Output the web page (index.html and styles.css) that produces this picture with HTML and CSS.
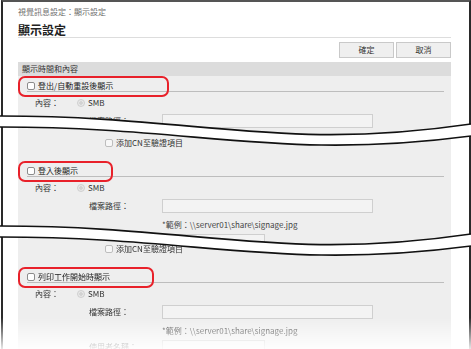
FILE: index.html
```html
<!DOCTYPE html>
<html lang="zh-Hant">
<head>
    <meta charset="UTF-8">
    <meta name="viewport" content="width=device-width, initial-scale=1.0">
    <title>顯示設定</title>
    <link rel="stylesheet" href="styles.css">
</head>
<body>
<div class="sheet">
    <div class="window">

        <!-- Top of the page -->
        <section class="slice slice-top">
            <p class="crumb">視覺訊息設定：顯示設定</p>
            <h1 class="title">顯示設定</h1>
            <div class="actions">
                <button class="btn">確定</button>
                <button class="btn">取消</button>
            </div>
            <div class="panel">
                <div class="panel-head">顯示時間和內容</div>

                <div class="sec-head">
                    <span class="check"></span>
                    <span>登出/自動重設後顯示</span>
                    <span class="mark mark-logout"></span>
                </div>
                <div class="field">
                    <span class="field-label">內容：</span>
                    <span class="radio"></span><span>SMB</span>
                </div>
                <div class="field sub">
                    <span class="field-label">檔案路徑：</span>
                    <span class="input"></span>
                </div>
                <div class="field sub note-row">
                    <span class="field-label"></span>
                    <span class="note">*範例：\\server01\share\signage.jpg</span>
                </div>
            </div>
        </section>

        <!-- Middle cut -->
        <section class="slice slice-mid">
            <div class="panel">
                <div class="field option">
                    <span class="check"></span>
                    <span>添加CN至驗證項目</span>
                </div>

                <div class="sec-head">
                    <span class="check"></span>
                    <span>登入後顯示</span>
                    <span class="mark mark-login"></span>
                </div>
                <div class="field">
                    <span class="field-label">內容：</span>
                    <span class="radio"></span><span>SMB</span>
                </div>
                <div class="field sub">
                    <span class="field-label">檔案路徑：</span>
                    <span class="input"></span>
                </div>
                <div class="field sub note-row">
                    <span class="field-label"></span>
                    <span class="note">*範例：\\server01\share\signage.jpg</span>
                </div>
                <div class="field sub">
                    <span class="field-label">使用者名稱：</span>
                    <span class="input input-short"></span>
                </div>
            </div>
        </section>

        <!-- Bottom cut -->
        <section class="slice slice-end">
            <div class="panel">
                <div class="field option">
                    <span class="check"></span>
                    <span>添加CN至驗證項目</span>
                </div>

                <div class="sec-head">
                    <span class="check"></span>
                    <span>列印工作開始時顯示</span>
                    <span class="mark mark-print"></span>
                </div>
                <div class="field">
                    <span class="field-label">內容：</span>
                    <span class="radio"></span><span>SMB</span>
                </div>
                <div class="field sub">
                    <span class="field-label">檔案路徑：</span>
                    <span class="input"></span>
                </div>
                <div class="field sub note-row">
                    <span class="field-label"></span>
                    <span class="note">*範例：\\server01\share\signage.jpg</span>
                </div>
                <div class="field sub">
                    <span class="field-label">使用者名稱：</span>
                    <span class="input input-short"></span>
                </div>
            </div>
        </section>
    </div>

    <!-- Torn edges drawn over the cuts -->
    <svg class="tears" width="471" height="349" viewBox="0 0 471 349">
        <defs>
            <g id="tear">
                <path class="tear-gap" d="M0,116 C200,116 280,152 471,124 L471,136 C280,161 200,127 0,127 Z"/>
                <path class="tear-edge" d="M0,116 C200,116 280,152 471,124"/>
                <path class="tear-edge" d="M0,127 C200,127 280,161 471,136"/>
            </g>
        </defs>
        <use href="#tear"/>
        <use href="#tear" transform="translate(0 110)"/>
    </svg>
</div>
</body>
</html>
```

FILE: styles.css
```css
/* General */
* {
    box-sizing: border-box;
}

body {
    margin: 0;
    background: #fff;
    font-family: "Noto Sans CJK TC", "Noto Sans", sans-serif;
    font-size: 8px;
    line-height: 12px;
    color: #333;
}

.sheet {
    position: relative;
    width: 471px;
    height: 349px;
    overflow: hidden;
}

.window {
    margin-left: 1px;
    width: 470px;
}

/* Page cuts */
.slice {
    display: flex;
    flex-direction: column;
    overflow: hidden;
    padding: 0 18px 0 15px;
    background: #fff;
    border-left: 2px solid #2a2a2a;
    border-right: 2px solid #2a2a2a;
}

.slice-top {
    height: 148px;
    padding-top: 2px;
    border-top: 2px solid #555;
}

.slice-mid,
.slice-end {
    margin-top: -21px;
    clip-path: polygon(0 0, 56px 0, 107px 3px, 153px 6px, 196px 10px, 238px 13px, 279px 16px, 322px 18px, 367px 17px, 416px 14px, 100% 9px, 100% 100%, 0 100%);
}

.slice-mid {
    height: 131px;
}

.slice-end {
    height: 112px;
    -webkit-mask-image: linear-gradient(to bottom, #000 72%, rgba(0, 0, 0, 0.1) 100%);
    mask-image: linear-gradient(to bottom, #000 72%, rgba(0, 0, 0, 0.1) 100%);
}

.slice-mid .panel {
    padding-top: 9px;
}

.slice-end .panel {
    padding-top: 5px;
}

/* Header */
.crumb {
    margin: 2px 0 0;
    color: #6f6f6f;
}

.title {
    margin: 4px 0 0;
    font-size: 12px;
    line-height: 15px;
    font-weight: bold;
    color: #222;
    border-bottom: 1px solid #ddd;
}

.actions {
    display: flex;
    justify-content: flex-end;
    gap: 2px;
    margin-top: 4px;
}

.btn {
    width: 55px;
    height: 16px;
    padding: 0;
    font: inherit;
    color: #333;
    background: #efefef;
    border: 1px solid #c9c9c9;
}

/* Settings panel */
.panel {
    flex: 1;
    margin-top: 4px;
    background: #eee;
}

.slice-mid .panel,
.slice-end .panel {
    margin-top: 0;
}

.panel-head {
    height: 14px;
    line-height: 14px;
    padding-left: 4px;
    background: #dcdcdc;
}

.sec-head {
    position: relative;
    display: flex;
    align-items: center;
    gap: 3px;
    height: 16px;
    padding-top: 4px;
    margin: 0 7px 0 9px;
    color: #222;
    border-bottom: 1px solid #bdbdbd;
}

.option + .sec-head {
    margin-top: 11px;
}

/* Red highlight round the option title */
.mark {
    position: absolute;
    left: -9px;
    top: 0;
    height: 21px;
    border: 2px solid #e8212a;
    border-radius: 7px;
}

.mark-logout { width: 151px; }
.mark-login  { width: 95px; }
.mark-print  { width: 136px; }

.check {
    flex: none;
    width: 8px;
    height: 8px;
    background: #fff;
    border: 1px solid #8c8c8c;
    border-radius: 2px;
}

/* Form rows */
.field {
    display: flex;
    align-items: center;
    height: 14px;
    margin-top: 4px;
    padding-left: 17px;
}

.field-label {
    flex: none;
    width: 42px;
}

.sub {
    padding-left: 71px;
}

.sub .field-label {
    width: 73px;
}

.note-row {
    margin-top: 5px;
    margin-bottom: -2px;
}

.note {
    color: #444;
    white-space: nowrap;
}

.option {
    gap: 3px;
    margin-top: 0;
    padding-left: 87px;
}

.option .check {
    background: #f7f7f7;
    border-color: #bdbdbd;
}

.radio {
    flex: none;
    width: 8px;
    height: 8px;
    margin-right: 3px;
    border: 1px solid #cfcfcf;
    border-radius: 50%;
    background: radial-gradient(circle, #d2d2d2 0 1.5px, #e8e8e8 2px);
}

.input {
    width: 211px;
    height: 14px;
    background: #f3f3f3;
    border: 1px solid #cfcfcf;
}

.input-short {
    width: 103px;
}

/* Torn edges */
.tears {
    position: absolute;
    left: 0;
    top: 0;
    z-index: 2;
    pointer-events: none;
}

.tear-gap {
    fill: #fff;
}

.tear-edge {
    fill: none;
    stroke: #111;
    stroke-width: 1.6;
}
```
